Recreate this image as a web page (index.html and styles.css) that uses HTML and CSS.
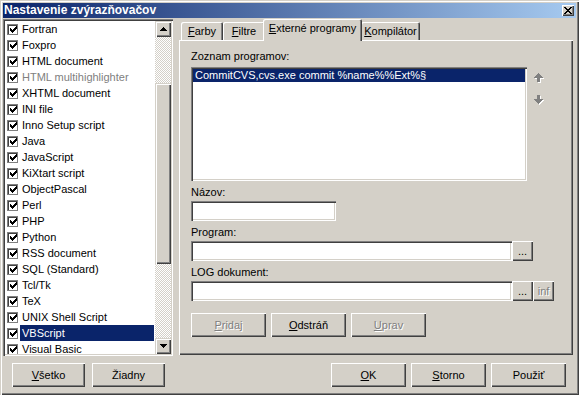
FILE: index.html
```html
<!DOCTYPE html>
<html lang="sk">
<head>
<meta charset="utf-8">
<title>Nastavenie zvýrazňovačov</title>
<link rel="stylesheet" href="styles.css">
</head>
<body>
<div class="window">
  <div class="titlebar">
    <span class="title">Nastavenie zvýrazňovačov</span>
    <span class="close"><svg width="8" height="7" viewBox="0 0 8 7" shape-rendering="crispEdges"><path d="M0 0h2v1h-2zM6 0h2v1h-2zM1 1h2v1h-2zM5 1h2v1h-2zM2 2h4v1h-4zM3 3h2v1h-2zM2 4h4v1h-4zM1 5h2v1h-2zM5 5h2v1h-2zM0 6h2v1h-2zM6 6h2v1h-2z" fill="#000"/></svg></span>
  </div>
  <div class="content">
    <div class="left">
      <div class="checklist">
        <div class="items">
          <div class="item"><span class="cb"><svg width="7" height="7" viewBox="0 0 7 7" shape-rendering="crispEdges"><path d="M6 0h1v1h-1zM5 1h2v1h-2zM0 2h1v1h-1zM4 2h3v1h-3zM0 3h2v1h-2zM3 3h3v1h-3zM0 4h5v1h-5zM1 5h3v1h-3zM2 6h1v1h-1z"/></svg></span><span class="lbl">Fortran</span></div>
          <div class="item"><span class="cb"><svg width="7" height="7" viewBox="0 0 7 7" shape-rendering="crispEdges"><path d="M6 0h1v1h-1zM5 1h2v1h-2zM0 2h1v1h-1zM4 2h3v1h-3zM0 3h2v1h-2zM3 3h3v1h-3zM0 4h5v1h-5zM1 5h3v1h-3zM2 6h1v1h-1z"/></svg></span><span class="lbl">Foxpro</span></div>
          <div class="item"><span class="cb"><svg width="7" height="7" viewBox="0 0 7 7" shape-rendering="crispEdges"><path d="M6 0h1v1h-1zM5 1h2v1h-2zM0 2h1v1h-1zM4 2h3v1h-3zM0 3h2v1h-2zM3 3h3v1h-3zM0 4h5v1h-5zM1 5h3v1h-3zM2 6h1v1h-1z"/></svg></span><span class="lbl">HTML document</span></div>
          <div class="item"><span class="cb"><svg width="7" height="7" viewBox="0 0 7 7" shape-rendering="crispEdges"><path d="M6 0h1v1h-1zM5 1h2v1h-2zM0 2h1v1h-1zM4 2h3v1h-3zM0 3h2v1h-2zM3 3h3v1h-3zM0 4h5v1h-5zM1 5h3v1h-3zM2 6h1v1h-1z"/></svg></span><span class="lbl dis">HTML multihighlighter</span></div>
          <div class="item"><span class="cb"><svg width="7" height="7" viewBox="0 0 7 7" shape-rendering="crispEdges"><path d="M6 0h1v1h-1zM5 1h2v1h-2zM0 2h1v1h-1zM4 2h3v1h-3zM0 3h2v1h-2zM3 3h3v1h-3zM0 4h5v1h-5zM1 5h3v1h-3zM2 6h1v1h-1z"/></svg></span><span class="lbl">XHTML document</span></div>
          <div class="item"><span class="cb"><svg width="7" height="7" viewBox="0 0 7 7" shape-rendering="crispEdges"><path d="M6 0h1v1h-1zM5 1h2v1h-2zM0 2h1v1h-1zM4 2h3v1h-3zM0 3h2v1h-2zM3 3h3v1h-3zM0 4h5v1h-5zM1 5h3v1h-3zM2 6h1v1h-1z"/></svg></span><span class="lbl">INI file</span></div>
          <div class="item"><span class="cb"><svg width="7" height="7" viewBox="0 0 7 7" shape-rendering="crispEdges"><path d="M6 0h1v1h-1zM5 1h2v1h-2zM0 2h1v1h-1zM4 2h3v1h-3zM0 3h2v1h-2zM3 3h3v1h-3zM0 4h5v1h-5zM1 5h3v1h-3zM2 6h1v1h-1z"/></svg></span><span class="lbl">Inno Setup script</span></div>
          <div class="item"><span class="cb"><svg width="7" height="7" viewBox="0 0 7 7" shape-rendering="crispEdges"><path d="M6 0h1v1h-1zM5 1h2v1h-2zM0 2h1v1h-1zM4 2h3v1h-3zM0 3h2v1h-2zM3 3h3v1h-3zM0 4h5v1h-5zM1 5h3v1h-3zM2 6h1v1h-1z"/></svg></span><span class="lbl">Java</span></div>
          <div class="item"><span class="cb"><svg width="7" height="7" viewBox="0 0 7 7" shape-rendering="crispEdges"><path d="M6 0h1v1h-1zM5 1h2v1h-2zM0 2h1v1h-1zM4 2h3v1h-3zM0 3h2v1h-2zM3 3h3v1h-3zM0 4h5v1h-5zM1 5h3v1h-3zM2 6h1v1h-1z"/></svg></span><span class="lbl">JavaScript</span></div>
          <div class="item"><span class="cb"><svg width="7" height="7" viewBox="0 0 7 7" shape-rendering="crispEdges"><path d="M6 0h1v1h-1zM5 1h2v1h-2zM0 2h1v1h-1zM4 2h3v1h-3zM0 3h2v1h-2zM3 3h3v1h-3zM0 4h5v1h-5zM1 5h3v1h-3zM2 6h1v1h-1z"/></svg></span><span class="lbl">KiXtart script</span></div>
          <div class="item"><span class="cb"><svg width="7" height="7" viewBox="0 0 7 7" shape-rendering="crispEdges"><path d="M6 0h1v1h-1zM5 1h2v1h-2zM0 2h1v1h-1zM4 2h3v1h-3zM0 3h2v1h-2zM3 3h3v1h-3zM0 4h5v1h-5zM1 5h3v1h-3zM2 6h1v1h-1z"/></svg></span><span class="lbl">ObjectPascal</span></div>
          <div class="item"><span class="cb"><svg width="7" height="7" viewBox="0 0 7 7" shape-rendering="crispEdges"><path d="M6 0h1v1h-1zM5 1h2v1h-2zM0 2h1v1h-1zM4 2h3v1h-3zM0 3h2v1h-2zM3 3h3v1h-3zM0 4h5v1h-5zM1 5h3v1h-3zM2 6h1v1h-1z"/></svg></span><span class="lbl">Perl</span></div>
          <div class="item"><span class="cb"><svg width="7" height="7" viewBox="0 0 7 7" shape-rendering="crispEdges"><path d="M6 0h1v1h-1zM5 1h2v1h-2zM0 2h1v1h-1zM4 2h3v1h-3zM0 3h2v1h-2zM3 3h3v1h-3zM0 4h5v1h-5zM1 5h3v1h-3zM2 6h1v1h-1z"/></svg></span><span class="lbl">PHP</span></div>
          <div class="item"><span class="cb"><svg width="7" height="7" viewBox="0 0 7 7" shape-rendering="crispEdges"><path d="M6 0h1v1h-1zM5 1h2v1h-2zM0 2h1v1h-1zM4 2h3v1h-3zM0 3h2v1h-2zM3 3h3v1h-3zM0 4h5v1h-5zM1 5h3v1h-3zM2 6h1v1h-1z"/></svg></span><span class="lbl">Python</span></div>
          <div class="item"><span class="cb"><svg width="7" height="7" viewBox="0 0 7 7" shape-rendering="crispEdges"><path d="M6 0h1v1h-1zM5 1h2v1h-2zM0 2h1v1h-1zM4 2h3v1h-3zM0 3h2v1h-2zM3 3h3v1h-3zM0 4h5v1h-5zM1 5h3v1h-3zM2 6h1v1h-1z"/></svg></span><span class="lbl">RSS document</span></div>
          <div class="item"><span class="cb"><svg width="7" height="7" viewBox="0 0 7 7" shape-rendering="crispEdges"><path d="M6 0h1v1h-1zM5 1h2v1h-2zM0 2h1v1h-1zM4 2h3v1h-3zM0 3h2v1h-2zM3 3h3v1h-3zM0 4h5v1h-5zM1 5h3v1h-3zM2 6h1v1h-1z"/></svg></span><span class="lbl">SQL (Standard)</span></div>
          <div class="item"><span class="cb"><svg width="7" height="7" viewBox="0 0 7 7" shape-rendering="crispEdges"><path d="M6 0h1v1h-1zM5 1h2v1h-2zM0 2h1v1h-1zM4 2h3v1h-3zM0 3h2v1h-2zM3 3h3v1h-3zM0 4h5v1h-5zM1 5h3v1h-3zM2 6h1v1h-1z"/></svg></span><span class="lbl">Tcl/Tk</span></div>
          <div class="item"><span class="cb"><svg width="7" height="7" viewBox="0 0 7 7" shape-rendering="crispEdges"><path d="M6 0h1v1h-1zM5 1h2v1h-2zM0 2h1v1h-1zM4 2h3v1h-3zM0 3h2v1h-2zM3 3h3v1h-3zM0 4h5v1h-5zM1 5h3v1h-3zM2 6h1v1h-1z"/></svg></span><span class="lbl">TeX</span></div>
          <div class="item"><span class="cb"><svg width="7" height="7" viewBox="0 0 7 7" shape-rendering="crispEdges"><path d="M6 0h1v1h-1zM5 1h2v1h-2zM0 2h1v1h-1zM4 2h3v1h-3zM0 3h2v1h-2zM3 3h3v1h-3zM0 4h5v1h-5zM1 5h3v1h-3zM2 6h1v1h-1z"/></svg></span><span class="lbl">UNIX Shell Script</span></div>
          <div class="item"><span class="cb"><svg width="7" height="7" viewBox="0 0 7 7" shape-rendering="crispEdges"><path d="M6 0h1v1h-1zM5 1h2v1h-2zM0 2h1v1h-1zM4 2h3v1h-3zM0 3h2v1h-2zM3 3h3v1h-3zM0 4h5v1h-5zM1 5h3v1h-3zM2 6h1v1h-1z"/></svg></span><span class="lbl sel">VBScript</span></div>
          <div class="item"><span class="cb"><svg width="7" height="7" viewBox="0 0 7 7" shape-rendering="crispEdges"><path d="M6 0h1v1h-1zM5 1h2v1h-2zM0 2h1v1h-1zM4 2h3v1h-3zM0 3h2v1h-2zM3 3h3v1h-3zM0 4h5v1h-5zM1 5h3v1h-3zM2 6h1v1h-1z"/></svg></span><span class="lbl">Visual Basic</span></div>
        </div>
        <div class="vscroll">
          <div class="sbtn"><svg width="7" height="4" viewBox="0 0 7 4" shape-rendering="crispEdges"><path d="M3 0h1v1h-1zM2 1h3v1h-3zM1 2h5v1h-5zM0 3h7v1h-7z"/></svg></div>
          <div class="track track-top"></div>
          <div class="thumb"></div>
          <div class="track track-bottom"></div>
          <div class="sbtn"><svg width="7" height="4" viewBox="0 0 7 4" shape-rendering="crispEdges"><path d="M0 0h7v1h-7zM1 1h5v1h-5zM2 2h3v1h-3zM3 3h1v1h-1z"/></svg></div>
        </div>
      </div>
      <div class="left-btns">
        <button class="btn btn-small"><u>V</u>šetko</button>
        <button class="btn btn-small">Žiadny</button>
      </div>
    </div>
    <div class="right">
      <div class="tabs">
        <div class="tab tab-farby"><u>F</u>arby</div>
        <div class="tab tab-filtre"><u>F</u>iltre</div>
        <div class="tab tab-ext active"><u>E</u>xterné programy</div>
        <div class="tab tab-komp"><u>K</u>ompilátor</div>
      </div>
      <div class="panel">
        <div class="label">Zoznam programov:</div>
        <div class="prog-row">
          <div class="plist">
            <div class="prow">CommitCVS,cvs.exe commit %name%%Ext%§</div>
          </div>
          <div class="arrows">
            <svg width="10" height="10" viewBox="0 0 10 10" shape-rendering="crispEdges"><path fill="#fff" d="M5 1h1v1h-1zM4 2h3v1h-3zM3 3h5v1h-5zM2 4h7v1h-7zM1 5h9v1h-9zM4 6h3v4h-3z"/><path fill="#808080" d="M4 0h1v1h-1zM3 1h3v1h-3zM2 2h5v1h-5zM1 3h7v1h-7zM0 4h9v1h-9zM3 5h3v4h-3z"/></svg>
            <svg width="10" height="10" viewBox="0 0 10 10" shape-rendering="crispEdges"><path fill="#fff" d="M4 1h3v4h-3zM1 5h9v1h-9zM2 6h7v1h-7zM3 7h5v1h-5zM4 8h3v1h-3zM5 9h1v1h-1z"/><path fill="#808080" d="M3 0h3v4h-3zM0 4h9v1h-9zM1 5h7v1h-7zM2 6h5v1h-5zM3 7h3v1h-3zM4 8h1v1h-1z"/></svg>
          </div>
        </div>
        <div class="label label-gap">Názov:</div>
        <div class="input input-name"></div>
        <div class="label label-gap">Program:</div>
        <div class="field-row">
          <div class="input input-wide"></div>
          <button class="btn btn-tiny">...</button>
        </div>
        <div class="label label-gap">LOG dokument:</div>
        <div class="field-row">
          <div class="input input-wide"></div>
          <button class="btn btn-tiny">...</button>
          <button class="btn btn-tiny disabled">inf</button>
        </div>
        <div class="panel-btns">
          <button class="btn disabled"><u>P</u>ridaj</button>
          <button class="btn"><u>O</u>dstráň</button>
          <button class="btn disabled"><u>U</u>prav</button>
        </div>
      </div>
      <div class="right-btns">
        <button class="btn"><u>O</u>K</button>
        <button class="btn"><u>S</u>torno</button>
        <button class="btn">Použiť</button>
      </div>
    </div>
  </div>
</div>
</body>
</html>
```

FILE: styles.css
```css
html, body {
  margin: 0;
  padding: 0;
  background: #d4d0c8;
}
body {
  font-family: "Liberation Sans", Arial, sans-serif;
  font-size: 11px;
  line-height: 13px;
  color: #000;
}
.window {
  width: 579px;
  height: 395px;
  box-sizing: border-box;
  padding: 3px;
  background: #d4d0c8;
  box-shadow: inset 1px 1px #d4d0c8, inset 2px 2px #fff, inset -1px -1px #404040, inset -2px -2px #808080;
  display: flex;
  flex-direction: column;
}
.titlebar {
  height: 15px;
  flex: none;
  background: linear-gradient(to right, #0a246a, #a6caf0);
  display: flex;
  align-items: center;
  justify-content: space-between;
  padding: 0 2px 0 1px;
}
.title {
  color: #fff;
  font-weight: bold;
  font-size: 12px;
  line-height: 15px;
  white-space: nowrap;
}
.close {
  width: 12px;
  height: 11px;
  box-sizing: border-box;
  background: #d4d0c8;
  box-shadow: inset 1px 1px #fff, inset -1px -1px #404040, inset -2px -2px #808080;
  display: flex;
  align-items: center;
  justify-content: center;
}
.close svg { display: block; margin-left: -1px; margin-top: -1px; }
.content {
  display: flex;
  margin-top: 1px;
}
.left {
  width: 170px;
  flex: none;
  display: flex;
  flex-direction: column;
}
.checklist {
  height: 337px;
  box-sizing: border-box;
  padding: 2px;
  background: #fff;
  box-shadow: inset 1px 1px #808080, inset 2px 2px #404040, inset -1px -1px #fff, inset -2px -2px #d4d0c8;
  display: flex;
}
.items {
  flex: 1;
  overflow: hidden;
  padding-left: 2px;
}
.item {
  height: 16px;
  display: flex;
  align-items: center;
  white-space: nowrap;
}
.cb {
  width: 11px;
  height: 11px;
  flex: none;
  box-sizing: border-box;
  background: #fff;
  border: 1px solid #808080;
  box-shadow: inset 1px 1px #404040;
  display: flex;
  align-items: center;
  justify-content: center;
  margin-right: 2px;
}
.cb svg { display: block; margin: 1px 0 0 1px; }
.lbl {
  flex: 1;
  line-height: 16px;
  height: 16px;
  padding: 0 2px;
  margin-right: 1px;
}
.lbl.sel { background: #0a246a; color: #fff; }
.lbl.dis { color: #808080; }
.vscroll {
  width: 16px;
  flex: none;
  display: flex;
  flex-direction: column;
}
.sbtn, .thumb {
  background: #d4d0c8;
  box-shadow: inset 1px 1px #d4d0c8, inset 2px 2px #fff, inset -1px -1px #404040, inset -2px -2px #808080;
}
.sbtn {
  height: 16px;
  flex: none;
  display: flex;
  align-items: center;
  justify-content: center;
}
.sbtn svg { display: block; }
.thumb { height: 181px; flex: none; }
.track {
  background: repeating-conic-gradient(#fff 0 25%, #d4d0c8 0 50%) 0 0 / 2px 2px;
}
.track-top { height: 46px; flex: none; }
.track-bottom { flex: 1; }

.btn {
  font: inherit;
  color: #000;
  width: 75px;
  height: 24px;
  padding: 0;
  margin: 0;
  border: 0;
  background: #d4d0c8;
  box-shadow: inset 1px 1px #fff, inset -1px -1px #404040, inset -2px -2px #808080;
  text-align: center;
  line-height: 13px;
}
.btn.disabled { color: #808080; text-shadow: 1px 1px #fff; }
.btn-small { width: 73px; }
.btn-tiny { width: 21px; height: 20px; flex: none; }
.left-btns {
  display: flex;
  gap: 7px;
  padding: 7px 0 0 9px;
}

.right {
  width: 394px;
  flex: none;
  margin-left: 6px;
  display: flex;
  flex-direction: column;
}
.tabs {
  height: 21px;
  display: flex;
  align-items: flex-end;
  padding-left: 2px;
}
.tab {
  height: 18px;
  box-sizing: border-box;
  padding-top: 3px;
  text-align: center;
  white-space: nowrap;
  background: #d4d0c8;
  border-radius: 2px 2px 0 0;
  box-shadow: inset 1px 1px #fff, inset -1px 0 #404040, inset -2px 0 #808080;
}
.tab-farby { width: 42px; }
.tab-filtre { width: 42px; }
.tab-ext { width: 96px; }
.tab-komp { width: 59px; }
.tab.active {
  height: 22px;
  width: 99px;
  margin: 0 -1px -1px -2px;
  position: relative;
  z-index: 1;
}
.panel {
  height: 315px;
  box-sizing: border-box;
  padding: 10px 0 0 12px;
  box-shadow: inset 1px 1px #fff, inset -1px -1px #404040, inset -2px -2px #808080;
}
.label { height: 13px; white-space: nowrap; }
.label-gap { margin-top: 5px; margin-bottom: 2px; }
.prog-row {
  display: flex;
  margin-top: 4px;
  margin-bottom: 2px;
}
.plist, .input {
  box-sizing: border-box;
  background: #fff;
  box-shadow: inset 1px 1px #808080, inset 2px 2px #404040, inset -1px -1px #fff, inset -2px -2px #d4d0c8;
}
.plist {
  width: 336px;
  height: 114px;
  padding: 2px;
}
.prow {
  height: 13px;
  line-height: 13px;
  background: #0a246a;
  color: #fff;
  padding-left: 2px;
  white-space: nowrap;
}
.arrows {
  margin-left: 7px;
  padding-top: 6px;
  display: flex;
  flex-direction: column;
  gap: 12px;
}
.arrows svg { display: block; }
.input { height: 20px; }
.input-name { width: 145px; }
.input-wide { width: 321px; }
.field-row { display: flex; }
.panel-btns {
  display: flex;
  gap: 5px;
  margin-top: 12px;
}
.right-btns {
  display: flex;
  justify-content: flex-end;
  gap: 5px;
  padding: 8px 7px 0 0;
}
```
